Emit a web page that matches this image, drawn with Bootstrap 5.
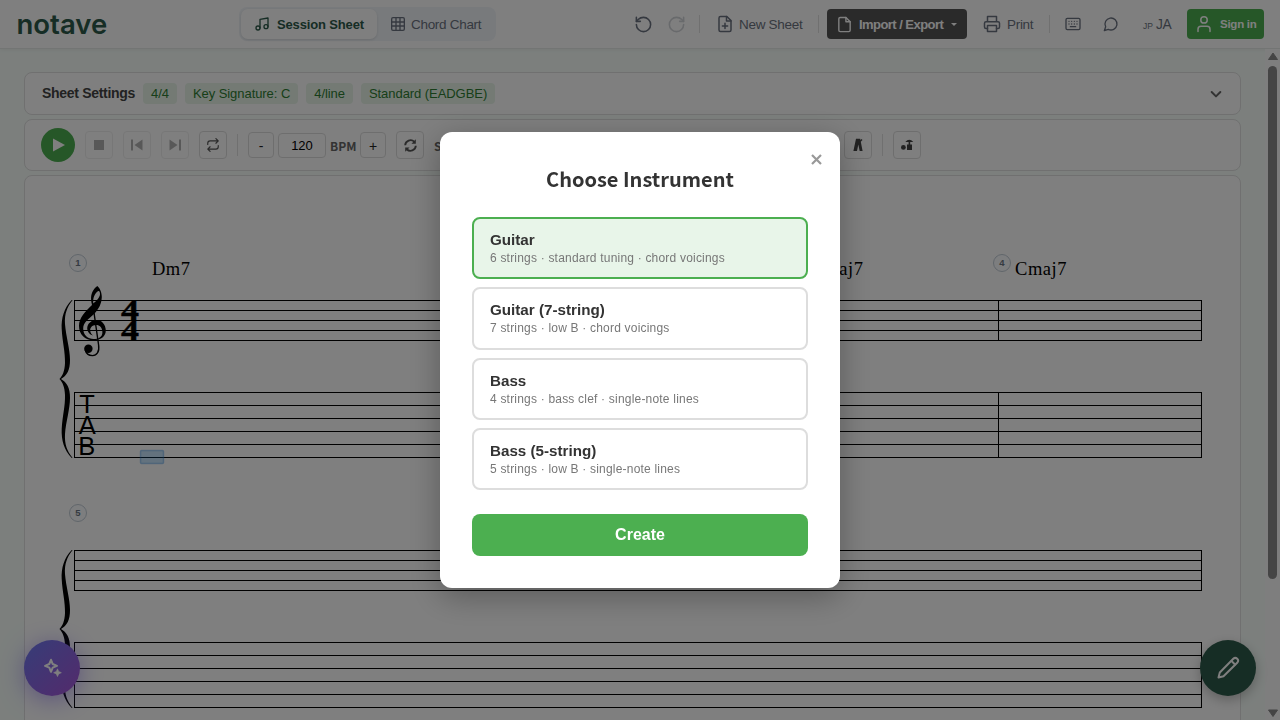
<!DOCTYPE html>
<html lang="en">
<head>
<meta charset="utf-8">
<meta name="viewport" content="width=device-width, initial-scale=1">
<title>notave</title>
<link href="https://cdn.jsdelivr.net/npm/bootstrap@5.3.0/dist/css/bootstrap.min.css" rel="stylesheet">
<style>
html,body{height:100%;overflow:hidden}
body{font-family:"Liberation Sans",Arial,sans-serif;font-size:14px;line-height:1.2;color:#333;background:#f8fffb}
svg{display:block;flex:none}
.ic{fill:none;stroke:currentColor;stroke-width:2;stroke-linecap:round;stroke-linejoin:round}
.topbar{height:49px;padding:0 16px;background:#fff;border-bottom:1px solid #e6ebe9;box-shadow:0 1px 4px rgba(0,0,0,.06);position:relative;color:#6b7280}
.brand{font:600 27.500px/40px Inter,sans-serif;color:#2d5a4a;width:223px;padding-left:.5px}
.ht{font-size:13.500px;letter-spacing:-.3px;padding-top:2px;white-space:nowrap}
.tabs{background:#f1f5f9;border-radius:8px;padding:2px;height:34px;width:257px}
.tabs>div{border-radius:7px;height:30px;gap:7px}
.tabs .on{width:136px;background:#fff;color:#2d5a4a;font-weight:700;font-size:13px;box-shadow:0 1px 3px rgba(0,0,0,.12);padding-left:13px;letter-spacing:-.15px}
.tabs .on span{padding-top:2px}
.tabs .off{padding-left:13px}
.vsep{width:1px;background:#e0e0e0;flex:none}
.btn-imp{width:140px;height:30px;background:#555;color:#fff;border-radius:4px;font-weight:700;font-size:13px;padding-left:9px;gap:6px}
.btn-imp span:nth-child(2){letter-spacing:-.55px;padding-top:2px;width:86px;white-space:nowrap}
.btn-sign{width:77px;height:30px;background:#4caf50;color:#fff;border-radius:4px;font-weight:700;font-size:11.500px;padding-left:8px;gap:7px;letter-spacing:-.25px}
.btn-sign span{padding-top:2px}
.caret{border:3px solid transparent;border-top-color:currentColor;border-bottom:0}
.page{width:1265px;padding:23px 24px 0;gap:4px}
.panel{background:#fff;border:1px solid #e0e0e0;border-radius:8px;padding:0 16px}
.settings-title{font-size:14px;width:93px;margin-left:1px;white-space:nowrap;letter-spacing:-.3px;color:#444}
.chip{background:#e8f5e9;color:#2e7d32;font-size:13px;line-height:17px;padding:2px 8px;border-radius:4px;height:21px;letter-spacing:-.06px;white-space:nowrap}
.tb{width:28px;height:28px;border:1px solid #ddd;border-radius:4px;background:#fff;color:#555;flex:none;display:flex;align-items:center;justify-content:center}
.tb.dim{opacity:.45}
.tb.sm26{width:26px;height:26px;color:#222;font-size:14px;padding-top:2px}
.tb.tempo{width:48px;height:25px;color:#000;font-size:13px;padding-top:1px}
.play{width:34px;height:34px;background:#4caf50;color:#fff}
.lbl{font:700 12px/16px "Noto Sans CJK JP",sans-serif;color:#666}
.score{height:560px;padding:0;overflow:hidden}
.sbar{position:absolute;right:0;top:49px;width:15px;height:671px}
.fab{position:absolute;width:56px;height:56px;top:640px;display:flex;align-items:center;justify-content:center;color:#fff}
.fab-ai{left:24px;background:linear-gradient(135deg,#6c7af0,#a855d8);box-shadow:0 4px 24px rgba(110,80,240,.5)}
.fab-pen{left:1200px;background:#2d5a4a;box-shadow:0 4px 12px rgba(0,0,0,.25)}
.shade{background:rgba(0,0,0,.5)}
.dlg{width:400px;height:456px;background:#fff;border-radius:12px;padding:32px;box-shadow:0 8px 32px rgba(0,0,0,.3);position:relative}
.dlg h2{font:700 20px/29px "Noto Sans CJK JP",sans-serif;color:#333;margin:0 0 24px;text-align:center}
.x{position:absolute;right:18px;top:21.500px;color:#999}
.opt{border:2px solid #ddd;border-radius:8px;height:62.300px;padding:12px 16px 0;margin-bottom:8px}
.opt.on{border-color:#4caf50;background:#e8f5e9}
.opt b{display:block;font-size:15.200px;line-height:18px;color:#333}
.opt span{display:block;font-size:12px;line-height:14px;color:#777;margin-top:2px;letter-spacing:.2px}
.create{height:42px;width:100%;border-radius:8px;background:#4caf50;color:#fff;font-weight:700;font-size:16px;margin-top:23.800px;border:0;padding-bottom:2px}
</style>
</head>
<body>
<header class="topbar d-flex align-items-center">
  <div class="brand">notave</div>
  <div class="tabs d-flex">
    <div class="on d-flex align-items-center">
      <svg class="ic" width="16" height="16" viewBox="0 0 24 24"><path d="M9 18V5l12-2v13"/><circle cx="6" cy="18" r="3"/><circle cx="18" cy="16" r="3"/></svg><span>Session Sheet</span></div>
    <div class="off d-flex align-items-center">
      <svg class="ic" width="16" height="16" viewBox="0 0 24 24" style="margin-right:-2px"><rect x="2.500" y="2.500" width="19" height="19" rx="2"/><path d="M2.500 9h19M2.500 15h19M9 2.500v19M15 2.500v19"/></svg><span class="ht">Chord Chart</span></div>
  </div>
  <svg class="ic" width="19" height="19" viewBox="0 0 24 24" style="margin-left:138px"><path d="M3 12a9 9 0 1 0 9-9 9.750 9.750 0 0 0-6.740 2.740L3 8"/><path d="M3 3v5h5"/></svg>
  <svg class="ic" width="19" height="19" viewBox="0 0 24 24" style="margin-left:14px;opacity:.3"><path d="M21 12a9 9 0 1 1-9-9c2.520 0 4.930 1 6.740 2.740L21 8"/><path d="M21 3v5h-5"/></svg>
  <span class="vsep" style="height:18px;margin-left:13px"></span>
  <svg class="ic" width="18" height="18" viewBox="0 0 24 24" style="margin-left:16px"><path d="M14.500 2H6a2 2 0 0 0-2 2v16a2 2 0 0 0 2 2h12a2 2 0 0 0 2-2V7.500L14.500 2z"/><path d="M14 2v6h6M12 11v7M8.500 14.500h7"/></svg>
  <span class="ht" style="margin-left:5px;width:79px">New Sheet</span>
  <span class="vsep" style="height:18px;"></span>
  <div class="btn-imp d-flex align-items-center" style="margin-left:8px"><svg class="ic" width="17" height="17" viewBox="0 0 24 24"><path d="M14 2H6a2 2 0 0 0-2 2v16a2 2 0 0 0 2 2h12a2 2 0 0 0 2-2V8z"/><path d="M14 2v6h6"/></svg><span>Import / Export</span><span class="caret"></span></div>
  <svg class="ic" width="18" height="18" viewBox="0 0 24 24" style="margin-left:16px"><path d="M6 9V2h12v7M6 18H4a2 2 0 0 1-2-2v-5a2 2 0 0 1 2-2h16a2 2 0 0 1 2 2v5a2 2 0 0 1-2 2h-2"/><path d="M6 14h12v8H6z"/></svg>
  <span class="ht" style="margin-left:6px;width:42px">Print</span>
  <span class="vsep" style="height:18px"></span>
  <svg class="ic" width="16" height="16" viewBox="0 0 24 24" style="margin-left:15px"><rect x="1.500" y="3.500" width="21" height="17" rx="2"/><path d="M6 8h.01M10 8h.01M14 8h.01M18 8h.01M6 12h.01M10 12h.01M14 12h.01M18 12h.01M8 16h8"/></svg>
  <svg class="ic" width="16" height="16" viewBox="0 0 24 24" style="margin-left:22px"><path d="M7.900 20A9 9 0 1 0 4 16.100L2 22Z"/></svg>
  <span style="font-size:8.500px;margin:5px 3px 0 24px;width:10px">JP</span><span style="font-size:13.800px;width:31px;padding-top:2px;letter-spacing:-.3px">JA</span>
  <div class="btn-sign d-flex align-items-center"><svg class="ic" width="18" height="18" viewBox="0 0 24 24"><path d="M20 22v-3a4 4 0 0 0-4-4H8a4 4 0 0 0-4 4v3"/><circle cx="12" cy="6.500" r="4.300"/></svg><span>Sign in</span></div>
</header>

<main class="page d-flex flex-column">
  <section class="panel d-flex align-items-center" style="height:43px;gap:8px">
    <b class="settings-title">Sheet Settings</b>
    <span class="chip">4/4</span><span class="chip">Key Signature: C</span><span class="chip">4/line</span><span class="chip">Standard (EADGBE)</span>
    <svg class="ic ms-auto" width="16" height="16" viewBox="0 0 24 24" style="stroke-width:3;color:#666"><path d="M5.500 9l6.500 6.500 6.500-6.500"/></svg>
  </section>
  <section class="panel d-flex align-items-center" style="height:52px;gap:10px">
    <div class="play rounded-circle d-flex align-items-center justify-content-center"><svg width="34" height="34" viewBox="0 0 34 34"><path d="M12 10.500v13l12-6.500z" fill="#fff"/></svg></div>
    <div class="tb dim"><svg width="10" height="10"><path d="M0 0h10v10H0z" fill="#555"/></svg></div>
    <div class="tb dim"><svg width="12" height="12" fill="#555"><path d="M0 .5h2v11H0zM11.500 .5v11L3.500 6z"/></svg></div>
    <div class="tb dim"><svg width="12" height="12" fill="#555"><path d="M10 .5h2v11h-2zM.5 .5v11L8.500 6z"/></svg></div>
    <div class="tb"><svg class="ic" width="14" height="14" viewBox="0 0 24 24"><path d="M17 1l4 4-4 4M3 11V9a4 4 0 0 1 4-4h14M7 23l-4-4 4-4M21 13v2a4 4 0 0 1-4 4H3"/></svg></div>
    <span class="vsep" style="height:22px"></span>
    <div class="d-flex align-items-center" style="gap:4px"><div class="tb sm26">-</div><div class="tb tempo">120</div><span class="lbl" style="width:26px;margin-top:2px">BPM</span><div class="tb sm26">+</div></div>
    <div class="tb"><svg class="ic" width="15" height="15" viewBox="0 0 24 24" style="stroke-width:3;stroke-linecap:butt"><path d="M3.500 11.500A8.500 8.500 0 0 1 18 6M20.500 12.500A8.500 8.500 0 0 1 6 18"/><path d="M20.500 2v7h-7zM3.500 22v-7h7z" fill="currentColor" stroke="none"/></svg></div>
    <span class="lbl" style="width:400px;margin-top:2px">Speed</span>
    <div class="tb"><svg width="12" height="14" fill="#444"><path d="M4 .8h4.200L10.600 13H7.700L6.300 6.500 5 13H1.400z"/><path d="M8 3.500l2-2" stroke="#444" stroke-width="1.500"/></svg></div>
    <span class="vsep" style="height:22px"></span>
    <div class="tb"><svg width="14" height="12" fill="#444"><circle cx="3.400" cy="8.400" r="2.400"/><path d="M5.300 3q3.900-4.600 8 0zM8.600 3h1.600v3H8.600zM7 5.500h5V11H7z"/></svg></div>
  </section>
  <section class="panel score">
    <svg width="1215" height="558" viewBox="25 176 1215 558">
      <defs>
        <g id="sys">
          <g stroke="#000" stroke-width="1"><path d="M74 300.500H1202M74 310.500H1202M74 320.500H1202M74 330.500H1202M74 340.500H1202M74 392.500H1202M74 405.500H1202M74 418.500H1202M74 431.500H1202M74 444.500H1202M74 457.500H1202M74.500 300V341M74.500 392V458M1201.500 300V341M1201.500 392V458"/></g>
          <path id="br" d="M71.800 300C64 308 61.200 318 61.700 329C62.400 342 65.300 352 65 363C64.700 371 62.500 376 59.500 379L61 379C67 375.500 70 370 70 360C70 349 65.900 336 65 324C64.400 314 67 307 72.600 300Z"/>
          <use href="#br" transform="matrix(1 0 0 -1 0 758)"/>
        </g>
      </defs>
      <use href="#sys"/><use href="#sys" y="250"/>
      <path d="M998.500 300V341M998.500 392V458" stroke="#000"/>
      <path fill-rule="evenodd" d="M97.300 286C100 288 101.900 293 101.800 297C101.600 304 98.500 309 95 313C88.500 319.500 83.200 322 83.200 328.500C83.200 335 88 339 93.500 339C96 339 97.800 338.600 99 338C101.500 336.600 102.500 334.500 102.400 332C102.200 327.500 99.500 324.900 96 325C92 325 90 328 90.200 330.500C90.400 333 91.500 334.300 93 335.500C89.500 334.500 87.300 331.500 87.200 328.500C87.200 323.500 91.500 320 96.500 320C102 320 105.800 325 105.800 330.500C105.800 336.500 100.500 340.300 93.500 340.300C85 340.300 79 334.500 79 326C79 318 85 311.500 92 305C91 301 90.900 298 91.200 296C92 291 95 287.500 97.300 286ZM98.200 291C95.500 292.500 92.600 297 93.300 303.500C97 300.500 100 297 100 294C100 292 99.300 290.600 98.200 291Z"/>
      <path d="M92.700 303.500L98.600 345C99.700 352 96.500 355.600 92.600 355.600C89 355.600 86 353.300 85.100 349.500" fill="none" stroke="#000" stroke-width="1.400"/>
      <circle cx="88.400" cy="348.800" r="4.200"/>
      <g font-family="Liberation Serif,serif" font-weight="700" font-size="29.500" stroke="#000" stroke-width=".4"><text transform="translate(121 320.300) scale(1.220 1)">4</text><text transform="translate(121 340.300) scale(1.220 1)">4</text></g>
      <g font-family="Liberation Sans,sans-serif" font-size="25.500"><text x="79.300" y="413">T</text><text x="78.700" y="434">A</text><text x="78.200" y="455">B</text></g>
      <g font-family="Liberation Serif,serif" font-size="18.500"><text x="152" y="275" textLength="38">Dm7</text><text x="811.500" y="275" textLength="51.500">Cmaj7</text><text x="1015" y="275" textLength="51.500">Cmaj7</text></g>
      <g fill="#fafcff" stroke="#c2ccd6"><circle cx="78" cy="263" r="8.500"/><circle cx="1002" cy="263" r="8.500"/><circle cx="78" cy="513" r="8.500"/></g>
      <g font-family="Liberation Sans,sans-serif" font-size="9.500" font-weight="700" fill="#6b7684" text-anchor="middle"><text x="78" y="266">1</text><text x="1002" y="266">4</text><text x="78" y="516">5</text></g>
      <rect x="140.500" y="450.500" width="23" height="13" rx="1" fill="rgba(33,150,243,.25)" stroke="rgba(33,130,220,.35)" stroke-width="1.500"/>
    </svg>
  </section>
</main>

<svg class="sbar" viewBox="0 0 15 671"><path d="M0 0h15v671H0z" fill="#fcfcfc"/><path d="M3.500 10.500L8 4l4.500 6.500zM3.500 661L8 667.500l4.500-6.500z" fill="#8b8b8b" stroke="#8b8b8b" stroke-linejoin="round"/><rect x="3" y="17" width="9" height="513" rx="4.500" fill="#8b8b8b"/></svg>

<div class="fab fab-ai rounded-circle"><svg width="22" height="22" viewBox="0 0 22 22" style="margin-left:2px"><path d="M9 2.800L10.700 7L15 8.800L10.700 10.600L9 14.800L7.300 10.600L3 8.800L7.300 7Z" fill="none" stroke="#fff" stroke-width="2" stroke-linejoin="round"/><path d="M15.500 11.800l1.200 2.700 2.700 1.200-2.700 1.200-1.200 2.700-1.200-2.700-2.700-1.200 2.700-1.200z" fill="#fff" stroke="#fff" stroke-width=".6"/></svg></div>
<div class="fab fab-pen rounded-circle"><svg class="ic" width="24" height="24" viewBox="0 0 24 24" style="stroke-width:2"><path d="M17.300 2.800a2.700 2.700 0 0 1 3.900 3.900L7.500 20.200 2.500 21.500 3.800 16.500Z"/><path d="M15.500 5l3.500 3.500"/></svg></div>

<div class="modal d-block shade">
  <div class="d-flex h-100 align-items-center justify-content-center">
    <div class="dlg">
      <svg class="x" width="11" height="11" viewBox="0 0 11 11"><path d="M1 1l9 9M10 1l-9 9" stroke="#999" stroke-width="2.200"/></svg>
      <h2>Choose Instrument</h2>
      <div class="opt on"><b>Guitar</b><span>6 strings · standard tuning · chord voicings</span></div>
      <div class="opt"><b>Guitar (7-string)</b><span>7 strings · low B · chord voicings</span></div>
      <div class="opt"><b>Bass</b><span>4 strings · bass clef · single-note lines</span></div>
      <div class="opt mb-0"><b>Bass (5-string)</b><span>5 strings · low B · single-note lines</span></div>
      <button class="create" type="button">Create</button>
    </div>
  </div>
</div>
<script src="https://cdn.jsdelivr.net/npm/bootstrap@5.3.0/dist/js/bootstrap.bundle.min.js"></script>
</body>
</html>
